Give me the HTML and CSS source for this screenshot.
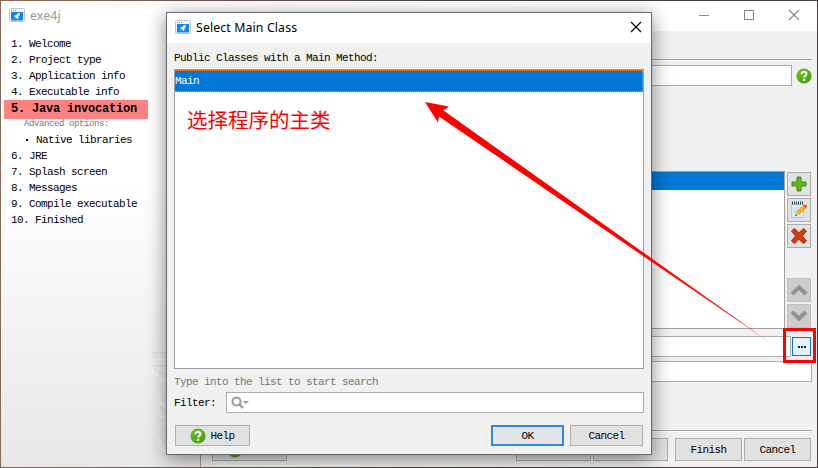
FILE: index.html
```html
<!DOCTYPE html>
<html lang="en">
<head>
<meta charset="utf-8">
<title>exe4j</title>
<link rel="stylesheet" href="styles.css">
</head>
<body>
<svg class="defs" width="0" height="0">
  <defs>
    <linearGradient id="green" x1="0" y1="0" x2="1" y2="1"><stop offset="0" stop-color="#6cc322"/><stop offset="1" stop-color="#439c10"/></linearGradient>
    <linearGradient id="fade" gradientUnits="userSpaceOnUse" x1="650" y1="259" x2="778" y2="348"><stop offset="0" stop-color="#f00"/><stop offset=".7" stop-color="#f00" stop-opacity=".9"/><stop offset="1" stop-color="#f00" stop-opacity=".2"/></linearGradient>
    <symbol id="app" viewBox="0 0 16 14">
      <rect x=".5" y=".5" width="15" height="13" rx="1" fill="#f5f5f5" stroke="#c4c4c4"/>
      <path d="M2 2.500h1M4 2.500h1M6 2.500h1" stroke="#f06a50"/>
      <rect x="2" y="4" width="12" height="8.500" fill="#0a84ff"/>
      <path d="M11 4.800 8.500 5.500 7 7.200H5.700L5 8.500 6.500 8.900 7.800 10.200 8.200 11.300 9.300 10.300V9L10.600 7.300zM5.800 9.700 5 11 6.500 10.300z" fill="#fff"/>
    </symbol>
    <symbol id="help" viewBox="0 0 16 16">
      <circle cx="8" cy="8" r="7.600" fill="url(#green)"/>
      <path d="M5.500 6.200C5.600 3.100 10.500 3.200 10.500 5.900 10.500 7.700 8.200 7.600 8.200 9.600" fill="none" stroke="#fff" stroke-width="2"/>
      <rect x="7.100" y="10.800" width="2.200" height="2" fill="#fff"/>
    </symbol>
    <symbol id="close" viewBox="0 0 12 12"><path d="M1 1 11 11M11 1 1 11" stroke="currentColor" stroke-width="1.100" fill="none"/></symbol>
  </defs>
</svg>

<div class="window">
  <header class="titlebar">
    <svg class="app-icon"><use href="#app"/></svg>
    <span class="caption">exe4j</span>
    <div class="controls">
      <svg width="12" height="12"><path d="M1 6.500H11" stroke="currentColor"/></svg>
      <svg width="12" height="12"><rect x="1.500" y="1.500" width="9" height="9" fill="none" stroke="currentColor"/></svg>
      <svg width="12" height="12"><use href="#close"/></svg>
    </div>
  </header>
  <div class="columns">
    <nav class="sidebar">
      <ul class="steps">
        <li>1. Welcome</li>
        <li>2. Project type</li>
        <li>3. Application info</li>
        <li>4. Executable info</li>
        <li class="current">5. Java invocation</li>
        <li class="hint">Advanced options:</li>
        <li class="sub"><i class="bullet"></i>Native libraries</li>
        <li>6. JRE</li>
        <li>7. Splash screen</li>
        <li>8. Messages</li>
        <li>9. Compile executable</li>
        <li>10. Finished</li>
      </ul>
      <div class="watermark">exe4j</div>
    </nav>
    <main class="content">
      <div class="rule"></div>
      <div class="row top-row"><div class="field"></div><svg class="help-icon"><use href="#help"/></svg></div>
      <div class="row list-row">
        <div class="list"><div class="picked"></div></div>
        <div class="tools">
          <div class="tool"><svg width="16" height="16"><path d="M6 1h4v5h5v4h-5v5H6v-5H1V6h5z" fill="#62b51c" stroke="#3f9211"/></svg></div>
          <div class="tool"><svg width="18" height="18"><path d="M1.500 3.500h12v13h-12z" fill="#d8effb" stroke="#a5cde2"/><path d="M2 2h12" stroke="#34434e" stroke-width="3" stroke-dasharray="1 1"/><path d="M3 7h8M3 9h7M3 11h5" stroke="#b5d9eb"/><path d="M5.500 14.500 6.500 11 13.500 4.500 16 7 9 13.500z" fill="#ffb619" stroke="#e18a10" stroke-width=".7"/><path d="M13.300 4.700 15 3.200 17.300 5.500 15.800 7.200z" fill="#e84b20"/><path d="M5.500 14.500 6.500 11 9 13.500z" fill="#ecd5aa"/><path d="M5 15 6 13 7 14z" fill="#333"/></svg></div>
          <div class="tool"><svg width="18" height="18"><path d="M1.500 4 4.500 1.500 9 5.800 13.500 1.500 16.500 4 12.400 9 16.500 14 13.500 16.500 9 12.300 4.500 16.500 1.500 14 5.600 9z" fill="#d43c10" stroke="#a82b0b"/></svg></div>
          <div class="tool off first-off"><svg width="18" height="12"><path d="M2 10 9 3.500 16 10" fill="none" stroke="#929292" stroke-width="4"/></svg></div>
          <div class="tool off"><svg width="18" height="12"><path d="M2 2 9 8.500 16 2" fill="none" stroke="#929292" stroke-width="4"/></svg></div>
        </div>
      </div>
      <div class="row main-class"><div class="field"></div><div class="browse"><i></i><i></i><i></i></div></div>
      <div class="row args"><div class="field"></div></div>
      <div class="rule bottom"></div>
      <footer class="actions">
        <div class="button help-button"><svg class="help-icon"><use href="#help"/></svg>Help</div>
        <div class="button wide back"><svg width="8" height="10"><path d="M7 0v10L0 5z"/></svg>Back</div>
        <div class="button wide">Next<svg width="8" height="10"><path d="M1 0v10l7-5z"/></svg></div>
        <div class="button finish">Finish</div>
        <div class="button">Cancel</div>
      </footer>
    </main>
  </div>
</div>

<section class="dialog">
  <header class="dialog-title">
    <svg class="app-icon"><use href="#app"/></svg>
    <span class="caption">Select Main Class</span>
    <svg class="dialog-close"><use href="#close"/></svg>
  </header>
  <div class="dialog-body">
    <div class="label">Public Classes with a Main Method:</div>
    <div class="class-list">
      <div class="selected">Main</div>
      <div class="note" lang="zh">选择程序的主类</div>
    </div>
    <div class="search-hint">Type into the list to start search</div>
    <div class="filter">
      <span>Filter:</span>
      <div class="filter-box"><svg width="18" height="14"><circle cx="5.500" cy="5.500" r="4" fill="none" stroke="#999" stroke-width="2"/><path d="M8.500 8.500 12 12" stroke="#999" stroke-width="2.400"/><path d="M12 5h6l-3 3z" fill="#999"/></svg></div>
    </div>
    <div class="dialog-actions">
      <div class="button help-button"><svg class="help-icon"><use href="#help"/></svg>Help</div>
      <div class="button ok">OK</div>
      <div class="button dismiss">Cancel</div>
    </div>
  </div>
</section>

<svg class="arrow" width="818" height="468"><path d="M425 102 449 106.500 443.500 110.500 777 347.500 439 116.500 438 122.500z" fill="url(#fade)"/></svg>
<div class="marker"></div>
</body>
</html>
```
FILE: styles.css
```css
* { box-sizing: border-box; }
body {
  margin: 0;
  width: 818px;
  height: 468px;
  overflow: hidden;
  position: relative;
  background: linear-gradient(90deg, #8b6657, #69544d 30%, #3e3b3d 70%, #464044);
  font-family: "Liberation Mono", monospace;
  font-size: 11px;
  letter-spacing: -.6px;
  line-height: 16px;
  color: #000;
}
svg { display: block; flex: none; }
.defs { position: absolute; }
.window {
  position: absolute;
  left: 1px;
  top: 1px;
  width: 816px;
  height: 466px;
  display: flex;
  flex-direction: column;
  background: #f0f0f0;
}
.titlebar {
  height: 30px;
  flex: none;
  display: flex;
  align-items: center;
  padding: 0 17px 2px 8px;
  background: #fff;
  color: #999;
}
.app-icon { width: 16px; height: 14px; }
.caption {
  margin-left: 5px;
  font-family: "Noto Sans", sans-serif;
  font-size: 12.3px;
  letter-spacing: .13px;
  position: relative;
  top: 1px;
}
.controls { margin-left: auto; display: flex; gap: 33px; color: #888; }
.columns { flex: 1; display: flex; min-height: 0; }
.sidebar {
  position: relative;
  width: 200px;
  border-right: 1px solid #a0a0a0;
  background: linear-gradient(#fff 35%, #e7e7e7);
}
.steps { list-style: none; margin: 0; padding: 5px 0 0 3px; }
.steps li { height: 16px; padding-left: 7px; white-space: pre; }
.steps .current {
  width: 144px;
  height: 19px;
  line-height: 18px;
  background: #ff8080;
  font-weight: bold;
  font-size: 12px;
  letter-spacing: -.2px;
}
.steps .hint { height: 13px; line-height: 11px; padding-left: 20px; font-size: 9px; letter-spacing: -.4px; color: #777; }
.steps .sub { display: flex; align-items: center; padding-left: 22px; }
.bullet { width: 2px; height: 2px; margin-right: 8px; background: #000; }
.watermark {
  position: absolute;
  left: 141px;
  top: 320px;
  height: 102px;
  writing-mode: vertical-rl;
  transform: rotate(180deg);
  font: bold 39px/48px "Open Sans", sans-serif;
  letter-spacing: 0;
  color: #ededed;
  text-shadow: 1px 1px 0 #dcdcdc, -1px -1px 0 #fafafa;
}
.content { flex: 1; display: flex; flex-direction: column; padding: 28px 5px 5px 11px; }
.rule { height: 2px; flex: none; border-top: 1px solid #a0a0a0; background: #fff; }
.row { display: flex; flex: none; }
.field { flex: 1; background: #fff; border: 1px solid #abadb3; }
.help-icon { width: 16px; height: 16px; }
.top-row { height: 21px; margin-top: 4px; gap: 4px; align-items: center; }
.top-row .field { height: 21px; }
.list-row { height: 158px; margin: 85px 1px 0 0; gap: 2px; }
.list { flex: 1; border: 1px solid #a0a0a0; background: #fff; }
.picked { height: 18px; background: #0078d7; }
.tools { display: flex; flex-direction: column; gap: 2px; padding-top: 1px; }
.tool {
  width: 24px;
  height: 24px;
  display: grid;
  place-items: center;
  background: #e1e1e1;
  border: 1px solid #adadad;
}
.tool.off { background: #ccc; border-color: #bfbfbf; }
.first-off { margin-top: 28px; }
.main-class { height: 21px; margin: 7px 1px 0 0; gap: 1px; align-items: center; }
.main-class .field { height: 21px; }
.browse {
  width: 19px;
  height: 19px;
  display: flex;
  justify-content: center;
  align-items: center;
  gap: 1px;
  border: 1px solid #0078d7;
  background: #e5f1fb;
}
.browse i { width: 2px; height: 2px; background: #223; }
.args { height: 21px; margin-top: 4px; }
.rule.bottom { margin-top: 48px; }
.actions { display: flex; margin: 6px 1px 0 0; }
.button {
  width: 67px;
  height: 23px;
  display: flex;
  align-items: center;
  justify-content: center;
  gap: 4px;
  background: #e1e1e1;
  border: 1px solid #adadad;
}
.actions .wide { width: 75px; margin-right: 2px; }
.actions .back { margin-left: auto; }
.actions .finish { margin: 0 2px 0 5px; }
.actions .help-button { width: 75px; }
.dialog {
  position: absolute;
  left: 166px;
  top: 12px;
  width: 486px;
  height: 443px;
  border: 1px solid #686868;
  background: #f0f0f0;
  box-shadow: 0 4px 18px rgba(0, 0, 0, .48);
}
.dialog-title {
  height: 30px;
  display: flex;
  align-items: center;
  padding: 0 9px 2px 8px;
  background: #fff;
}
.dialog-close { width: 12px; height: 12px; margin-left: auto; }
.dialog-body { padding: 7px 7px 0; }
.label { height: 19px; }
.class-list { height: 300px; border: 1px solid #a0a0a0; background: #fff; }
.selected { height: 22px; line-height: 20px; background: #0078d7; border: 1px dotted #ff8728; border-left-width: 0; color: #fff; }
.note {
  margin: 13px 0 0 12px;
  font: 20.5px/28px "Noto Sans CJK SC", sans-serif;
  letter-spacing: 0;
  color: #f00;
}
.search-hint { margin-top: 5px; height: 18px; color: #777; }
.filter { display: flex; align-items: center; height: 21px; }
.filter span { width: 52px; }
.filter-box { flex: 1; height: 21px; display: flex; align-items: center; padding-left: 4px; border: 1px solid #abadb3; background: #fff; }
.dialog-actions { display: flex; margin: 12px 1px 0; }
.dialog-actions .help-button { width: 75px; height: 21px; }
.dialog-actions .ok { width: 73px; height: 21px; margin: 0 6px 0 auto; border: 2px solid #2a8adb; background: #e1e5ea; }
.dialog-actions .dismiss { width: 73px; height: 21px; }
.arrow { position: absolute; left: 0; top: 0; }
.marker { position: absolute; left: 783px; top: 328px; width: 33px; height: 35px; border: 3px solid #f00; }
```
